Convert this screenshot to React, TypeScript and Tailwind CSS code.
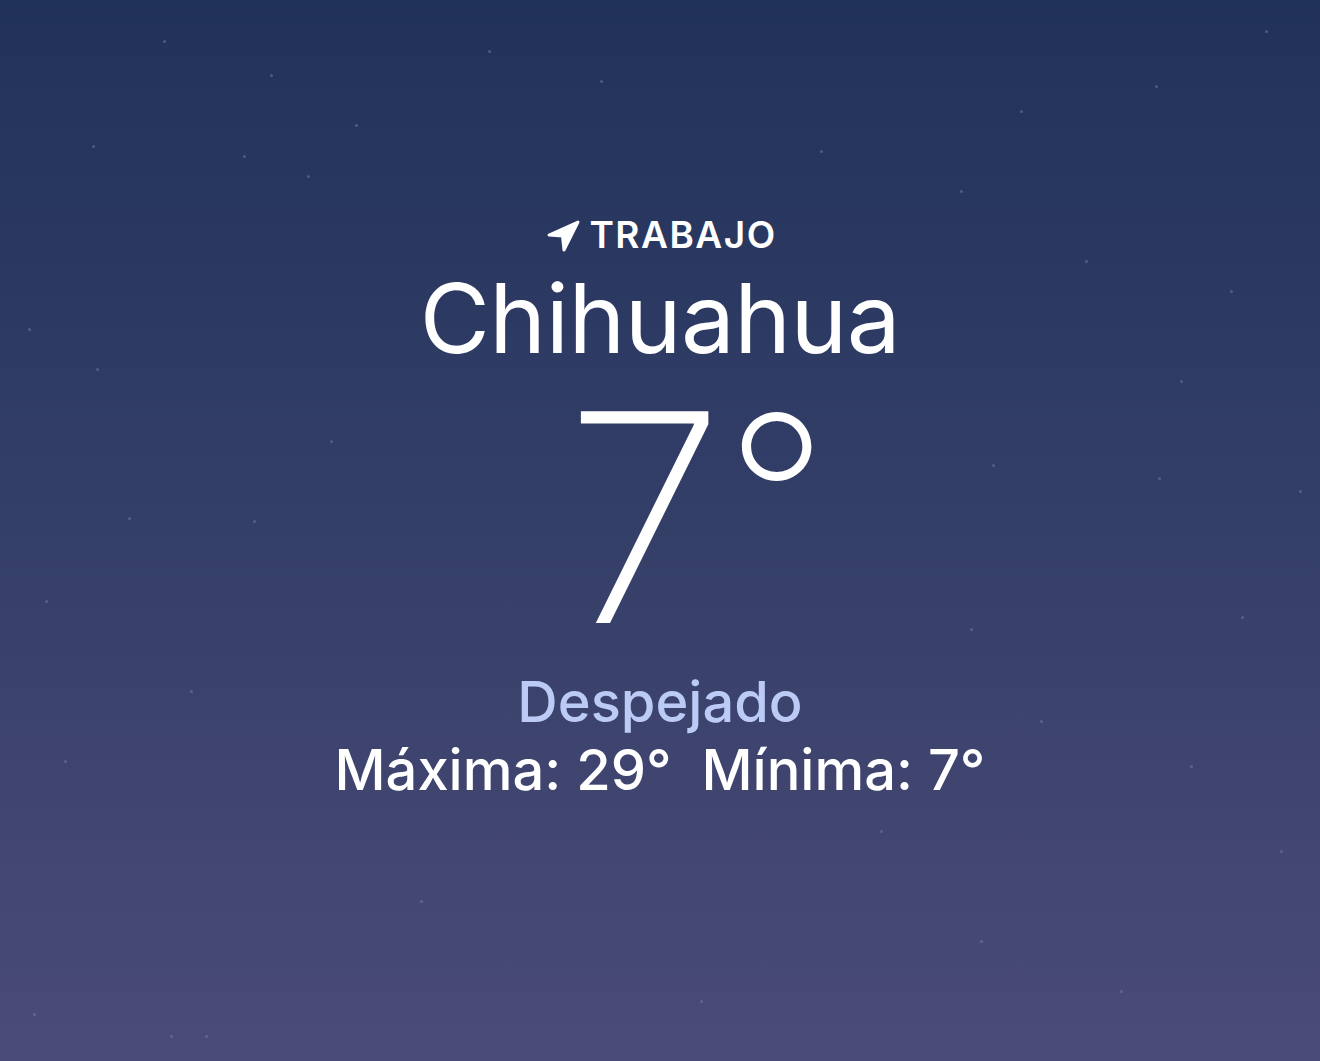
const stars = [
  [163, 40], [270, 74], [92, 145], [307, 175], [243, 155], [355, 124], [28, 328], [96, 368],
  [488, 50], [1020, 110], [1155, 85], [1265, 30], [960, 190], [1230, 290], [1085, 260], [1180, 380],
  [992, 464], [1158, 477], [1299, 490], [1241, 616], [970, 628], [1040, 720], [1190, 765], [1280, 850],
  [253, 520], [128, 517], [330, 440], [45, 600], [190, 690], [64, 760], [33, 1013], [170, 1035],
  [205, 1035], [980, 940], [1120, 990], [820, 150], [700, 1000], [880, 830], [420, 900], [600, 80],
];

function NavArrow() {
  return (
    <svg width="36" height="33" viewBox="0 0 36 33" className="mr-[8px] mt-[1px]">
      <path
        d="M33 3 L4 16 L17.5 17 L19 31 Z"
        fill="white"
        stroke="white"
        strokeWidth="3"
        strokeLinejoin="round"
      />
    </svg>
  );
}

export default function App() {
  return (
    <div className="relative w-[1320px] h-[1061px] overflow-hidden bg-gradient-to-b from-[#21325a] via-[#343f68] to-[#4b4b77] font-['Inter','Liberation_Sans',sans-serif] text-white">
      {stars.map(([x, y], i) => (
        <span
          key={i}
          className="absolute w-[3px] h-[3px] rounded-full bg-[#7482ad] opacity-50 blur-[0.5px]"
          style={{ left: x, top: y }}
        />
      ))}
      <div className="relative flex flex-col items-center pt-[213px]">
        <div className="flex items-center h-[44px] ml-[2px]">
          <NavArrow />
          <span className="text-[37px] font-semibold tracking-[1.5px] leading-[44px]">TRABAJO</span>
        </div>
        <div className="text-[96px] leading-[104px] mt-[9px] tracking-[-0.5px]">Chihuahua</div>
        <div className="flex items-start mt-[28px] pl-[72px]">
          <span className="text-[291px] font-extralight leading-[240px] mt-[-1px]">7</span>
          <span className="text-[226px] font-extralight leading-[240px] mt-[-22px]">°</span>
        </div>
        <div className="text-[56px] font-medium text-[#bccaf6] leading-[62px] mt-[34px]">Despejado</div>
        <div className="text-[56px] font-medium leading-[70px] mt-[2px]">
          Máxima: 29°&nbsp; Mínima: 7°
        </div>
      </div>
    </div>
  );
}
